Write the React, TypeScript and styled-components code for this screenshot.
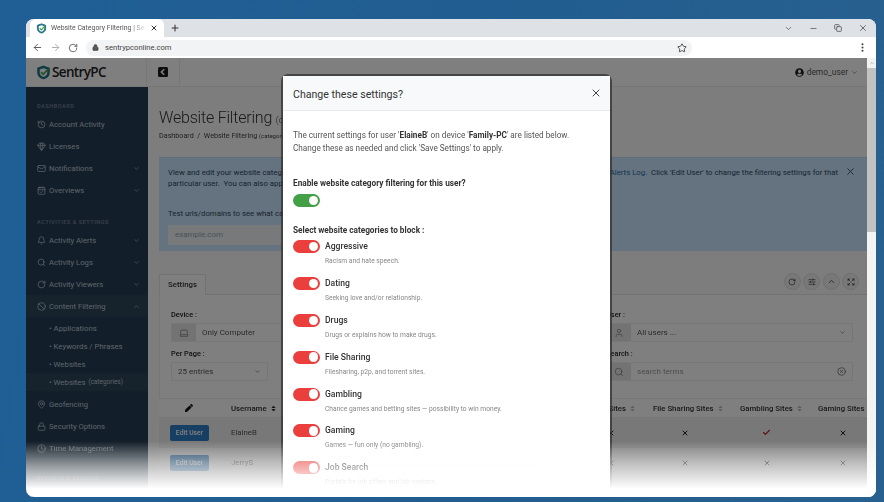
import React from 'react';
import styled, { createGlobalStyle } from 'styled-components';
import {
  ArrowLeft,
  ArrowRight,
  Ban,
  Bell,
  CalendarCheck,
  Check,
  ChevronDown,
  ChevronUp,
  Clock,
  Copy,
  Expand,
  Gem,
  History,
  Laptop,
  Lock,
  Mail,
  MapPin,
  Minus,
  MoreVertical,
  Plus,
  RotateCw,
  Search,
  SlidersHorizontal,
  Star,
  User,
  X,
  XCircle,
} from 'lucide-react';
import { FaPen, FaSort, FaUserCircle } from 'react-icons/fa';

const GlobalStyle = createGlobalStyle`
  html, body { margin: 0; padding: 0; height: 100%; }
  body {
    width: 884px;
    height: 502px;
    overflow: hidden;
    font-family: Roboto, "Liberation Sans", sans-serif;
    background: linear-gradient(100deg, #1f5f95 0%, #225d90 55%, #28618f 100%);
  }
  * { box-sizing: border-box; }
`;

const Stage = styled.div`
  padding: 19px 8px 5px 26px;
  height: 502px;
`;

const Browser = styled.div`
  position: relative;
  display: flex;
  flex-direction: column;
  width: 850px;
  height: 478px;
  border-radius: 8px;
  overflow: hidden;
  background: #fff;
  filter: blur(0.4px);
`;

const TabStrip = styled.div`
  display: flex;
  align-items: flex-end;
  height: 18px;
  padding-left: 4px;
  background: #dee1e6;
  flex: none;
`;

const Tab = styled.div`
  display: flex;
  align-items: center;
  gap: 4px;
  width: 134px;
  height: 18px;
  padding: 0 6px;
  background: #fff;
  border-radius: 6px 6px 0 0;
  font-size: 6.9px;
  color: #555;
  white-space: nowrap;
`;

const TabTitle = styled.span`
  flex: 1;
  overflow: hidden;
  mask-image: linear-gradient(to right, #000 85%, transparent 100%);
`;

const NewTab = styled.div`
  display: flex;
  align-items: center;
  margin-left: 6px;
  height: 18px;
  color: #333;
`;

const WindowControls = styled.div`
  display: flex;
  align-items: center;
  gap: 16px;
  height: 18px;
  margin-left: auto;
  padding-right: 8px;
  color: #555;
`;

const Toolbar = styled.div`
  display: flex;
  align-items: center;
  height: 21px;
  padding: 0 8px 0 6px;
  gap: 7px;
  background: #fff;
  color: #555;
  flex: none;
`;

const Omnibox = styled.div`
  display: flex;
  align-items: center;
  gap: 6px;
  width: 606px;
  height: 16px;
  margin-left: 1px;
  padding: 0 5px 0 6px;
  border-radius: 8px;
  background: #f1f3f4;
  font-size: 7.6px;
  color: #444;
`;

const Url = styled.span`
  flex: 1;
`;

const MenuDots = styled.div`
  margin-left: auto;
  display: flex;
  color: #444;
`;

const PageRow = styled.div`
  display: flex;
  flex: 1;
  min-height: 0;
`;

const Viewport = styled.div`
  position: relative;
  flex: 1;
  overflow: hidden;
  background: #fafafa;
  display: flex;
  flex-direction: column;
`;

const Scrollbar = styled.div`
  width: 9px;
  background: #f3f3f3;
  display: flex;
  flex-direction: column;
  flex: none;
`;

const ScrollArrow = styled.div`
  height: 10px;
  display: flex;
  align-items: center;
  justify-content: center;
  color: #888;
`;

const ScrollThumb = styled.div`
  height: 164px;
  background: #c2c2c2;
`;

const TopBar = styled.div`
  display: flex;
  align-items: center;
  height: 29px;
  background: #fff;
  border-bottom: 1px solid #eee;
  flex: none;
`;

const LogoCell = styled.div`
  display: flex;
  align-items: center;
  gap: 1px;
  width: 121px;
  height: 100%;
  padding-left: 10px;
  border-right: 1px solid #eee;
`;

const LogoText = styled.span`
  font-family: "Open Sans", sans-serif;
  font-size: 13.5px;
  font-weight: 600;
  color: #222;
  letter-spacing: -0.65px;
`;

const ToggleCell = styled.div`
  display: flex;
  align-items: center;
  justify-content: center;
  width: 33px;
  height: 100%;
  border-right: 1px solid #eee;
`;

const UserMenu = styled.div`
  display: flex;
  align-items: center;
  gap: 3px;
  margin-left: auto;
  padding-right: 9px;
  font-size: 8.4px;
  color: #555;
`;

const Columns = styled.div`
  display: flex;
  flex: 1;
  min-height: 0;
`;

const Sidebar = styled.nav`
  width: 122px;
  flex: none;
  padding-top: 13px;
  background: #253c52;
  color: #bccad6;
`;

const SideLabel = styled.div<{ $top?: number }>`
  padding-left: 11px;
  margin-top: ${(p) => p.$top ?? 0}px;
  margin-bottom: 1px;
  height: 12px;
  line-height: 12px;
  font-size: 5.6px;
  font-weight: 500;
  letter-spacing: 0.5px;
  color: #74879a;
`;

const SideItem = styled.div<{ $active?: boolean }>`
  display: flex;
  align-items: center;
  gap: 3px;
  height: 22px;
  padding: 0 8px 0 11px;
  font-size: 7.7px;
  background: ${(p) => (p.$active ? '#2d4459' : 'transparent')};
`;

const SideText = styled.span`
  flex: 1;
`;

const SubList = styled.div`
  padding: 2px 0;
`;

const SubItem = styled.div<{ $active?: boolean }>`
  display: flex;
  align-items: center;
  gap: 3px;
  height: 18px;
  padding-left: 23px;
  font-size: 7.8px;
  background: ${(p) => (p.$active ? '#2d4459' : 'transparent')};

  small {
    font-size: 6.4px;
  }
`;

const Main = styled.main`
  flex: 1;
  min-width: 0;
  padding: 20px 0 0 11px;
  overflow: hidden;
`;

const PageTitle = styled.h1`
  margin: 0;
  font-size: 16px;
  letter-spacing: -0.2px;
  line-height: 22px;
  font-weight: 300;
  color: #333;
  white-space: nowrap;

  small {
    font-size: 9px;
    letter-spacing: 0;
  }
`;

const Crumbs = styled.div`
  font-size: 7.2px;
  line-height: 10px;
  color: #444;

  small {
    font-size: 6px;
  }
`;

const Alert = styled.div`
  margin-top: 16px;
  height: 94px;
  padding: 9px 0 0 9px;
  background: #c8e6ff;
  font-size: 7.8px;
  line-height: 11px;
  color: #30485c;
  position: relative;
  border-top: 1px solid #bcdcf5;
  white-space: nowrap;
`;

const AlertLine = styled.div`
  display: flex;
  justify-content: space-between;
  width: 670px;

  a {
    color: #2a6aa5;
  }
`;

const AlertClose = styled.div`
  position: absolute;
  top: 8px;
  right: 11px;
  color: #34495c;
`;

const TestLabel = styled.div`
  margin-top: 19px;
`;

const TestInput = styled.div`
  margin-top: 6px;
  width: 240px;
  height: 20px;
  padding: 0 7px;
  line-height: 20px;
  background: #eef3f7;
  color: #98a2aa;
  font-size: 8px;
`;

const TabsRow = styled.div`
  display: flex;
  align-items: center;
  margin-top: 23px;
  height: 21px;
  border-bottom: 1px solid #e6e6e6;
`;

const TabButton = styled.div`
  width: 47px;
  height: 21px;
  line-height: 20px;
  text-align: center;
  background: #fff;
  border: 1px solid #e6e6e6;
  border-bottom: 0;
  font-size: 7.8px;
  font-weight: 500;
  color: #333;
`;

const CircleRow = styled.div`
  display: flex;
  gap: 2.5px;
  margin: -5px 0 0 auto;
  padding-right: 8px;
`;

const CircleButton = styled.div`
  display: flex;
  align-items: center;
  justify-content: center;
  width: 17px;
  height: 17px;
  border-radius: 50%;
  background: #f0f0f0;
  border: 1px solid #ddd;
  color: #333;
`;

const Card = styled.div`
  background: #fff;
  padding: 14px 14px 0 11px;
  height: 103px;
  border-left: 1px solid #efefef;
  display: flex;
  justify-content: space-between;
`;

const FilterCol = styled.div<{ $width: number }>`
  width: ${(p) => p.$width}px;
  flex: none;
`;

const FieldLabel = styled.div`
  height: 11px;
  line-height: 11px;
  font-size: 7.4px;
  font-weight: 500;
  color: #222;
  margin-bottom: 3px;
`;

const Field = styled.div<{ $width?: number }>`
  display: flex;
  align-items: center;
  width: ${(p) => (p.$width ? `${p.$width}px` : '100%')};
  height: 19px;
  margin-bottom: 6px;
  border: 1px solid #efefef;
  font-size: 8px;
  color: #555;
`;

const FieldIcon = styled.div`
  display: flex;
  align-items: center;
  justify-content: center;
  width: 24px;
  height: 100%;
  background: #e7e7e7;
  color: #888;
  flex: none;
`;

const FieldText = styled.span<{ $muted?: boolean }>`
  flex: 1;
  padding-left: 6px;
  color: ${(p) => (p.$muted ? '#999' : '#555')};
`;

const FieldEnd = styled.div`
  display: flex;
  padding-right: 6px;
  color: #666;
`;

const TableHead = styled.div`
  display: grid;
  grid-template-columns: 62px 100px 315px 95px 87px 80px;
  align-items: center;
  height: 20px;
  background: #fff;
  border-top: 1px solid #eee;
  border-bottom: 1px solid #eee;
  font-size: 7.8px;
  font-weight: 500;
  color: #333;
  white-space: nowrap;
`;

const Row = styled(TableHead)<{ $shade?: boolean }>`
  height: 30px;
  border-top: 0;
  background: ${(p) => (p.$shade ? '#f0f0f0' : '#fff')};
  font-weight: 400;
  color: #555;
`;

const HeadCell = styled.div<{ $pad?: number; $end?: boolean }>`
  display: flex;
  align-items: center;
  gap: 3px;
  justify-content: ${(p) => (p.$end ? 'flex-end' : 'flex-start')};
  padding-left: ${(p) => p.$pad ?? 0}px;
  color: inherit;
`;

const MarkCell = styled.div<{ $offset: number }>`
  display: flex;
  padding-left: ${(p) => p.$offset}px;
`;

const EditUser = styled.div`
  display: flex;
  align-items: center;
  justify-content: center;
  margin-left: 11px;
  width: 39px;
  height: 16px;
  border-radius: 2px;
  background: #2f7fc8;
  color: #fff;
  font-size: 6.8px;
  font-weight: 500;
`;

const Backdrop = styled.div`
  position: absolute;
  inset: 0;
  background: rgba(0, 0, 0, 0.5);
`;

const Modal = styled.div`
  position: absolute;
  left: 257px;
  top: 18px;
  width: 327px;
  height: 460px;
  background: #fff;
  border-radius: 5px 5px 0 0;
  box-shadow: 0 0 0 2px rgba(50, 50, 50, 0.75);
  color: #333;
`;

const ModalHeader = styled.div`
  display: flex;
  align-items: center;
  justify-content: space-between;
  height: 35px;
  padding: 0 8px 0 10px;
  background: #f7f9fb;
  border-bottom: 1px solid #e8ebee;
  font-size: 10.6px;
  color: #333;
`;

const ModalTitle = styled.span`
  padding-top: 3px;
`;

const ModalBody = styled.div`
  padding: 18px 10px 0;
`;

const Intro = styled.p`
  margin: 0 0 23px;
  font-size: 8.2px;
  line-height: 12.5px;
  color: #555;

  b {
    font-weight: 700;
    color: #333;
  }
`;

const SectionLabel = styled.div`
  font-size: 8.25px;
  line-height: 12px;
  font-weight: 700;
  color: #333;
`;

const Track = styled.div<{ $color: string }>`
  display: flex;
  justify-content: flex-end;
  align-items: center;
  width: 27px;
  height: 13px;
  padding-right: 2px;
  border-radius: 7px;
  background: ${(p) => p.$color};
  flex: none;
`;

const Knob = styled.div`
  width: 9.5px;
  height: 9.5px;
  border-radius: 50%;
  background: #fff;
`;

const Master = styled.div`
  margin: 5px 0 17px;
`;

const CategoryList = styled.div`
  margin-top: 4px;
  display: flex;
  flex-direction: column;
  gap: 6.9px;
`;

const Category = styled.div`
  display: grid;
  grid-template-columns: 27px 1fr;
  column-gap: 5px;
  height: 30px;
`;

const CategoryName = styled.div`
  font-size: 8.6px;
  line-height: 13px;
  font-weight: 500;
  color: #333;
`;

const CategoryInfo = styled.div`
  margin-top: 3px;
  font-size: 6.7px;
  line-height: 10px;
  color: #888;
  white-space: nowrap;
`;

const Fade = styled.div`
  position: absolute;
  left: 0;
  right: 0;
  bottom: 0;
  height: 56px;
  background: linear-gradient(to bottom, rgba(255, 255, 255, 0) 0%, rgba(255, 255, 255, 0.5) 40%, #fff 85%);
  pointer-events: none;
`;

const menu = [
  { label: 'Account Activity', icon: History },
  { label: 'Licenses', icon: Gem },
  { label: 'Notifications', icon: Mail, more: true },
  { label: 'Overviews', icon: CalendarCheck, more: true },
];

const activity = [
  { label: 'Activity Alerts', icon: Bell },
  { label: 'Activity Logs', icon: Search },
  { label: 'Activity Viewers', icon: RotateCw },
];

const lower = [
  { label: 'Geofencing', icon: MapPin },
  { label: 'Security Options', icon: Lock },
  { label: 'Time Management', icon: Clock },
];

const categories = [
  ['Aggressive', 'Racism and hate speech.'],
  ['Dating', 'Seeking love and/or relationship.'],
  ['Drugs', 'Drugs or explains how to make drugs.'],
  ['File Sharing', 'Filesharing, p2p, and torrent sites.'],
  ['Gambling', 'Chance games and betting sites — possibility to win money.'],
  ['Gaming', 'Games — fun only (no gambling).'],
  ['Job Search', 'Portals for job offers and job seekers.'],
];

const Shield = ({ size }: { size: number }) => (
  <svg width={size} height={size} viewBox="0 0 24 24" fill="none">
    <path d="M12 2 L21 5 V12 C21 17 17 20.5 12 22 C7 20.5 3 17 3 12 V5 Z" fill="#1f7a8c" stroke="#1f6f7f" strokeWidth="2" />
    <path d="M12 5 L18 7 V12 C18 15.5 15.5 18 12 19 C8.5 18 6 15.5 6 12 V7 Z" fill="#fff" />
    <path d="M8 11.5 L11.5 15 L20 6" fill="none" stroke="#3fa34d" strokeWidth="2.6" />
  </svg>
);

const CollapseIcon = () => (
  <svg width="10" height="10" viewBox="0 0 10 10">
    <rect width="10" height="10" rx="1.5" fill="#1a1a1a" />
    <path d="M6.2 2.2 L3.4 5 L6.2 7.8" fill="none" stroke="#fff" strokeWidth="1.6" />
  </svg>
);

const App: React.FC = () => {
  return (
    <Stage>
      <GlobalStyle />
      <Browser>
        <TabStrip>
          <Tab>
            <Shield size={11} />
            <TabTitle>Website Category Filtering | Sentry</TabTitle>
            <X size={8} strokeWidth={3} color="#333" />
          </Tab>
          <NewTab>
            <Plus size={10} strokeWidth={2.5} />
          </NewTab>
          <WindowControls>
            <ChevronDown size={9} />
            <Minus size={9} />
            <Copy size={8} strokeWidth={2.5} />
            <X size={10} />
          </WindowControls>
        </TabStrip>
        <Toolbar>
          <ArrowLeft size={11} />
          <ArrowRight size={11} color="#aaa" />
          <RotateCw size={10} />
          <Omnibox>
            <Lock size={7} fill="#555" />
            <Url>sentrypconline.com</Url>
            <Star size={10} color="#333" />
          </Omnibox>
          <MenuDots>
            <MoreVertical size={11} strokeWidth={2.5} />
          </MenuDots>
        </Toolbar>
        <PageRow>
          <Viewport>
            <TopBar>
              <LogoCell>
                <Shield size={15} />
                <LogoText>SentryPC</LogoText>
              </LogoCell>
              <ToggleCell>
                <CollapseIcon />
              </ToggleCell>
              <UserMenu>
                <FaUserCircle size={9} color="#222" />
                demo_user
                <ChevronDown size={7} />
              </UserMenu>
            </TopBar>
            <Columns>
              <Sidebar>
                <SideLabel>DASHBOARD</SideLabel>
                {menu.map(({ label, icon: Icon, more }) => (
                  <SideItem key={label}>
                    <Icon size={9} />
                    <SideText>{label}</SideText>
                    {more && <ChevronDown size={7} />}
                  </SideItem>
                ))}
                <SideLabel $top={15}>ACTIVITIES &amp; SETTINGS</SideLabel>
                {activity.map(({ label, icon: Icon }) => (
                  <SideItem key={label}>
                    <Icon size={9} />
                    <SideText>{label}</SideText>
                    <ChevronDown size={7} />
                  </SideItem>
                ))}
                <SideItem $active>
                  <Ban size={9} />
                  <SideText>Content Filtering</SideText>
                  <ChevronUp size={7} />
                </SideItem>
                <SubList>
                  <SubItem>• Applications</SubItem>
                  <SubItem>• Keywords / Phrases</SubItem>
                  <SubItem>• Websites</SubItem>
                  <SubItem $active>
                    • Websites <small>(categories)</small>
                  </SubItem>
                </SubList>
                {lower.map(({ label, icon: Icon }) => (
                  <SideItem key={label}>
                    <Icon size={9} />
                    <SideText>{label}</SideText>
                  </SideItem>
                ))}
                <SideLabel $top={13}>REPORTS &amp; RESULTS</SideLabel>
              </Sidebar>
              <Main>
                <PageTitle>
                  Website Filtering <small>(categories)</small>
                </PageTitle>
                <Crumbs>
                  Dashboard &nbsp;/&nbsp; Website Filtering <small>(categories)</small>
                </Crumbs>
                <Alert>
                  <AlertLine>
                    <span>View and edit your website category filtering settings for each user below.</span>
                    <span>
                      <a>Alerts Log.</a>&nbsp; Click 'Edit User' to change the filtering settings for that
                    </span>
                  </AlertLine>
                  <AlertLine>
                    <span>particular user.&nbsp; You can also apply these settings to all users.</span>
                  </AlertLine>
                  <AlertClose>
                    <X size={11} />
                  </AlertClose>
                  <TestLabel>Test urls/domains to see what category they belong to.</TestLabel>
                  <TestInput>example.com</TestInput>
                </Alert>
                <TabsRow>
                  <TabButton>Settings</TabButton>
                  <CircleRow>
                    <CircleButton>
                      <RotateCw size={8} />
                    </CircleButton>
                    <CircleButton>
                      <SlidersHorizontal size={8} />
                    </CircleButton>
                    <CircleButton>
                      <ChevronUp size={9} />
                    </CircleButton>
                    <CircleButton>
                      <Expand size={8} />
                    </CircleButton>
                  </CircleRow>
                </TabsRow>
                <Card>
                  <FilterCol $width={280}>
                    <FieldLabel>Device :</FieldLabel>
                    <Field>
                      <FieldIcon>
                        <Laptop size={10} />
                      </FieldIcon>
                      <FieldText>Only Computer</FieldText>
                    </Field>
                    <FieldLabel>Per Page :</FieldLabel>
                    <Field $width={97}>
                      <FieldText>25 entries</FieldText>
                      <FieldEnd>
                        <ChevronDown size={7} />
                      </FieldEnd>
                    </Field>
                  </FilterCol>
                  <FilterCol $width={247}>
                    <FieldLabel>User :</FieldLabel>
                    <Field>
                      <FieldIcon>
                        <User size={10} />
                      </FieldIcon>
                      <FieldText>All users ...</FieldText>
                      <FieldEnd>
                        <ChevronDown size={7} />
                      </FieldEnd>
                    </Field>
                    <FieldLabel>Search :</FieldLabel>
                    <Field>
                      <FieldIcon>
                        <Search size={10} />
                      </FieldIcon>
                      <FieldText $muted>search terms</FieldText>
                      <FieldEnd>
                        <XCircle size={9} />
                      </FieldEnd>
                    </Field>
                  </FilterCol>
                </Card>
                <TableHead>
                  <HeadCell $pad={26}>
                    <FaPen size={8} color="#111" />
                  </HeadCell>
                  <HeadCell $pad={10}>
                    Username <FaSort size={7} />
                  </HeadCell>
                  <HeadCell $end>
                    Drugs Sites <FaSort size={7} color="#bbb" />
                  </HeadCell>
                  <HeadCell $pad={17}>
                    File Sharing Sites <FaSort size={7} color="#bbb" />
                  </HeadCell>
                  <HeadCell $pad={9}>
                    Gambling Sites <FaSort size={7} color="#bbb" />
                  </HeadCell>
                  <HeadCell>Gaming Sites</HeadCell>
                </TableHead>
                <Row $shade>
                  <div>
                    <EditUser>Edit User</EditUser>
                  </div>
                  <HeadCell $pad={10}>ElaineB</HeadCell>
                  <MarkCell $offset={286}>
                    <X size={8} strokeWidth={3} color="#222" />
                  </MarkCell>
                  <MarkCell $offset={45}>
                    <X size={8} strokeWidth={3} color="#222" />
                  </MarkCell>
                  <MarkCell $offset={31}>
                    <Check size={9} strokeWidth={3} color="#c0202a" />
                  </MarkCell>
                  <MarkCell $offset={21}>
                    <X size={8} strokeWidth={3} color="#222" />
                  </MarkCell>
                </Row>
                <Row>
                  <div>
                    <EditUser>Edit User</EditUser>
                  </div>
                  <HeadCell $pad={10}>JerryS</HeadCell>
                  <MarkCell $offset={286}>
                    <X size={8} strokeWidth={3} color="#222" />
                  </MarkCell>
                  <MarkCell $offset={45}>
                    <X size={8} strokeWidth={3} color="#222" />
                  </MarkCell>
                  <MarkCell $offset={32}>
                    <X size={8} strokeWidth={3} color="#222" />
                  </MarkCell>
                  <MarkCell $offset={21}>
                    <X size={8} strokeWidth={3} color="#222" />
                  </MarkCell>
                </Row>
              </Main>
            </Columns>
            <Backdrop />
            <Modal>
              <ModalHeader>
                <ModalTitle>Change these settings?</ModalTitle>
                <X size={12} color="#444" />
              </ModalHeader>
              <ModalBody>
                <Intro>
                  The current settings for user '<b>ElaineB</b>' on device '<b>Family-PC</b>' are listed below.
                  <br />
                  Change these as needed and click 'Save Settings' to apply.
                </Intro>
                <SectionLabel>Enable website category filtering for this user?</SectionLabel>
                <Master>
                  <Track $color="#43a047">
                    <Knob />
                  </Track>
                </Master>
                <SectionLabel>Select website categories to block :</SectionLabel>
                <CategoryList>
                  {categories.map(([name, info]) => (
                    <Category key={name}>
                      <Track $color="#ea3f3c">
                        <Knob />
                      </Track>
                      <div>
                        <CategoryName>{name}</CategoryName>
                        <CategoryInfo>{info}</CategoryInfo>
                      </div>
                    </Category>
                  ))}
                </CategoryList>
              </ModalBody>
            </Modal>
          </Viewport>
          <Scrollbar>
            <ScrollArrow>
              <ChevronUp size={6} />
            </ScrollArrow>
            <ScrollThumb />
          </Scrollbar>
        </PageRow>
        <Fade />
      </Browser>
    </Stage>
  );
};

export default App;
